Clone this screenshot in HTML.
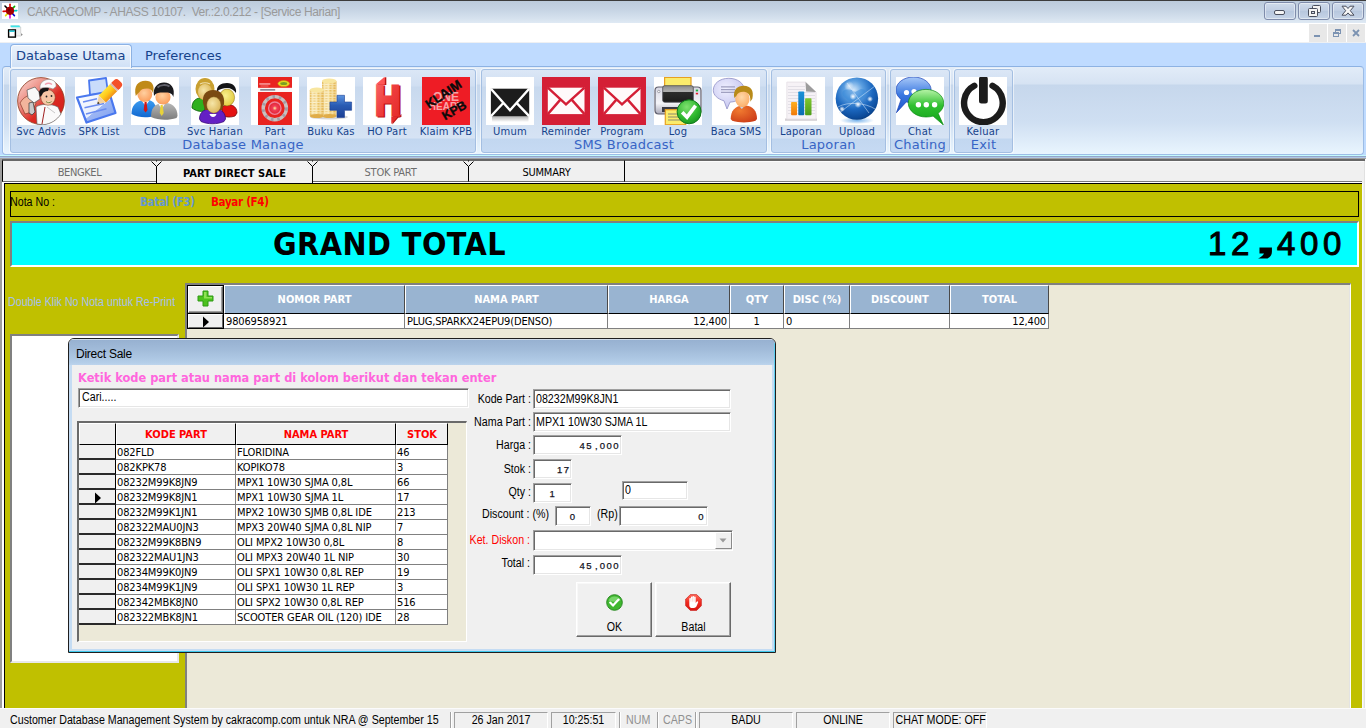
<!DOCTYPE html>
<html lang="id">
<head>
<meta charset="utf-8">
<title>CAKRACOMP - AHASS 10107</title>
<style>
html,body{margin:0;padding:0;}
body{width:1366px;height:728px;overflow:hidden;background:#ece9d8;position:relative;font-family:"Liberation Sans",sans-serif;font-size:12px;color:#000;}
.abs{position:absolute;}
div,span{box-sizing:border-box;}
.nw{white-space:nowrap;}
/* title bar */
#title{left:0;top:0;width:1366px;height:23px;background:linear-gradient(#bccbdc 0,#c6d4e4 40%,#d6e2ee 80%,#dfe9f4 100%);border-top:1px solid #3c3c3c;}
#title .txt{left:27px;top:4px;font:12px "Liberation Sans",sans-serif;color:#9a9a9a;letter-spacing:-0.38px;white-space:pre;}
.wbtn{top:2px;width:32px;height:18px;border:1px solid #7f8cab;border-radius:3px;background:linear-gradient(#cfdbea,#bfcde2 50%,#b7c7de 50%,#c6d4e7);box-shadow:inset 0 0 0 1px rgba(255,255,255,.45);}
#menu{left:0;top:23px;width:1366px;height:19px;background:#fff;}
.mbtn{top:24px;width:18px;height:18px;background:#e8e8e8;}
/* ribbon */
#ribtabs{left:0;top:42px;width:1366px;height:113px;background:#bfdbff;}
#ribbon{left:2px;top:66px;width:1362px;height:89px;border:1px solid #9dbde6;border-radius:4px;background:linear-gradient(#e2ecf8 0,#d6e3f3 17px,#c6d7ec 18px,#cfdff2 55px,#e9f5fe 100%);border-top:1px solid #8db2e3;box-shadow:inset 1px 0 0 rgba(255,255,255,.6);}
.rtab{font:13px "DejaVu Sans",sans-serif;margin-top:1px;color:#15428b;white-space:nowrap;}
.grp{top:69px;height:84px;border:1px solid #a4bfe2;border-radius:3px;background:linear-gradient(#dbe7f6 0,#d0dff2 16px,#c8d9ee 17px,#d6e3f4 68px,#c2d7f0 69px,#c6daf3 100%);box-shadow:0 0 0 1px rgba(255,255,255,.55);}
.ico{top:77px;width:48px;height:48px;background:#fff;overflow:hidden;}
.ilab{top:126px;font:10px/12px "DejaVu Sans",sans-serif;color:#15428b;text-align:center;white-space:nowrap;width:80px;margin-left:-16px;letter-spacing:.2px;}
.glab{top:137px;letter-spacing:.25px;font:13px "DejaVu Sans",sans-serif;color:#3764c5;text-align:center;white-space:nowrap;}

/* ms sans serif emulation */
.ms{font:12.5px "Liberation Sans",sans-serif;white-space:nowrap;transform:scaleX(.853);transform-origin:0 0;}
.msr{transform-origin:100% 0;text-align:right;}
.msc{transform-origin:50% 0;text-align:center;}
.th{font:11px "DejaVu Sans Condensed","DejaVu Sans",sans-serif;white-space:nowrap;}
.thb{font:bold 11px "DejaVu Sans Condensed","DejaVu Sans",sans-serif;white-space:nowrap;}
/* page tabs */
.ptab{top:160px;height:22px;border:1px solid #000;border-top-color:#676767;border-bottom:1px solid #6d6d6d;background:#f0f0f0;text-align:center;line-height:24px;}
/* main grid */
.gh{top:285px;height:29px;background:#99b4d1;border-top:1px solid #fff;border-left:1px solid #fff;border-right:1px solid #4a4a4a;border-bottom:1px solid #000;color:#fff;text-align:center;line-height:28px;}
.gc{top:314px;height:15px;background:#fff;border-right:1px solid #808080;border-bottom:1px solid #808080;line-height:15px;padding:0 2px;letter-spacing:-.15px;}

/* dialog */
.inp{background:#fff;border:1px solid;border-color:#a0a0a0 #fff #fff #a0a0a0;box-shadow:inset 1px 1px 0 #696969,inset -1px -1px 0 #e6e6e6;}
.lbl{width:120px;}
.lcds{font:9.5px "Liberation Sans",sans-serif;letter-spacing:1.47px;color:#141424;-webkit-text-stroke:.25px #141424;white-space:nowrap;text-align:right;}
.cm{display:inline-block;width:6.75px;letter-spacing:0;text-align:center;}
.dh{top:423px;height:22px;background:#f0f0f0;border-right:1px solid #000;border-bottom:1px solid #000;border-top:1px solid #fff;border-left:1px solid #fff;color:#ff0000;text-align:center;line-height:21px;}
.dc{height:15px;background:#fff;border-right:1px solid #808080;border-bottom:1px solid #808080;line-height:14px;padding:1px 0 0 1px;overflow:hidden;letter-spacing:-.12px;}
.di{left:79px;width:37px;height:15px;background:#f0f0f0;border-right:1px solid #000;border-bottom:2px solid #2a2a2a;}
.btn{top:582px;width:76px;height:55px;background:#f0f0f0;border:1px solid;border-color:#fff #696969 #696969 #fff;box-shadow:inset -1px -1px 0 #a0a0a0,inset 1px 1px 0 #f8f8f8;}
</style>
</head>
<body>
<!-- TITLE BAR -->
<div id="title" class="abs">
  <div class="abs txt">CAKRACOMP - AHASS 10107.  Ver.:2.0.212 - [Service Harian]</div>
</div>
<!-- app icon -->
<svg class="abs" style="left:2px;top:3px" width="16" height="16" viewBox="0 0 16 16">
  <rect width="16" height="16" fill="#fff"/>
  <g stroke-width="1.6" stroke-linecap="round">
    <line x1="8" y1="8" x2="8" y2="1.2" stroke="#e00000"/>
    <line x1="8" y1="8" x2="12.6" y2="3.4" stroke="#00b000"/>
    <line x1="8" y1="8" x2="14.8" y2="7.6" stroke="#00c8c8"/>
    <line x1="8" y1="8" x2="12.4" y2="12.6" stroke="#0000d0"/>
    <line x1="8" y1="8" x2="8" y2="15" stroke="#e000e0"/>
    <line x1="8" y1="8" x2="3.6" y2="12.6" stroke="#e0e000"/>
    <line x1="8" y1="8" x2="1.2" y2="8.4" stroke="#e00000"/>
    <line x1="8" y1="8" x2="3" y2="3" stroke="#000"/>
  </g>
  <circle cx="8" cy="7.8" r="4.1" fill="#a40000"/>
  <circle cx="7" cy="7" r="1.6" fill="#7a0000"/>
</svg>
<!-- window buttons -->
<div class="abs wbtn" style="left:1264px"><div class="abs" style="left:9px;top:7px;width:11px;height:5px;border:1px solid #4a4f5e;border-radius:2px;background:#f4f4f4"></div></div>
<div class="abs wbtn" style="left:1298px">
  <div class="abs" style="left:13px;top:2px;width:9px;height:8px;border:1px solid #4a4f5e;border-radius:1.5px;background:#f4f4f4"></div>
  <div class="abs" style="left:9px;top:5px;width:10px;height:9px;border:1px solid #4a4f5e;border-radius:1.5px;background:#f4f4f4"></div>
  <div class="abs" style="left:12px;top:8px;width:4px;height:3px;border:1px solid #4a4f5e;background:#d5dcea"></div>
</div>
<div class="abs wbtn" style="left:1332px">
  <svg class="abs" style="left:8px;top:2px" width="14" height="12" viewBox="0 0 14 12"><path d="M1 1.200L5 1.200L7 3.500L9 1.200L13 1.200L9.300 5.700L13 10.200L9 10.200L7 7.900L5 10.200L1 10.200L4.700 5.700Z" fill="#f6f6f6" stroke="#4a4f5e" stroke-width="1" stroke-linejoin="round"/></svg>
</div>

<div id="menu" class="abs"></div>
<!-- mdi child icon -->
<svg class="abs" style="left:7px;top:24px" width="17" height="16" viewBox="0 0 17 16">
  <path d="M3.500 1.800h8.800l1.400 1.200v6l1.800 1.600-1.800 1.400H8.500" fill="#efefef" stroke="#c9c9c9" stroke-width=".7"/>
  <path d="M3.600 1.600h8.600l1.200 1.600h-9.800z" fill="#3ee6ea"/>
  <rect x="1.600" y="5.900" width="6.800" height="7.200" fill="#fff" stroke="#000" stroke-width="1.400"/>
  <rect x="2.300" y="6.400" width="5.400" height="1.500" fill="#16c4d6"/>
  <path d="M13.800 9.200l1.900 1.500-1.700 1.100z" fill="#8c8c8c"/>
</svg>
<div class="abs mbtn" style="left:1309px"><div class="abs" style="left:5px;top:11px;width:6px;height:2px;background:#7c93b2"></div></div>
<div class="abs mbtn" style="left:1328px">
  <div class="abs" style="left:7px;top:5px;width:6px;height:5px;border:1px solid #7c93b2;border-top-width:2px"></div>
  <div class="abs" style="left:5px;top:8px;width:6px;height:5px;border:1px solid #7c93b2;border-top-width:2px;background:#e8e8e8"></div>
</div>
<div class="abs mbtn" style="left:1347px"><svg class="abs" style="left:5px;top:5px" width="8" height="8" viewBox="0 0 8 8"><path d="M1 1L7 7M7 1L1 7" stroke="#7c93b2" stroke-width="1.8"/></svg></div>

<div id="ribtabs" class="abs"></div>
<div class="abs" style="left:0;top:42px;width:1366px;height:1px;background:#eef0f3"></div>
<div id="ribbon" class="abs"></div>
<!-- ribbon tabs -->
<div class="abs" style="z-index:2;left:10px;top:44px;width:122px;height:24px;border:1px solid #8db2e3;border-bottom:none;border-radius:4px 4px 0 0;background:linear-gradient(#eaf2fc,#dbe8f8 60%,#cfe0f6);box-shadow:inset 0 0 0 1px rgba(255,255,255,.7)"></div>
<div class="abs rtab" style="z-index:3;left:16px;top:47px">Database Utama</div>
<div class="abs rtab" style="left:145px;top:47px">Preferences</div>
<div class="abs grp" style="left:10px;width:466px"></div>
<div class="abs glab" style="left:10px;width:466px">Database Manage</div>
<div class="abs grp" style="left:481px;width:286px"></div>
<div class="abs glab" style="left:481px;width:286px">SMS Broadcast</div>
<div class="abs grp" style="left:771px;width:115px"></div>
<div class="abs glab" style="left:771px;width:115px">Laporan</div>
<div class="abs grp" style="left:890px;width:60px"></div>
<div class="abs glab" style="left:890px;width:60px">Chating</div>
<div class="abs grp" style="left:954px;width:59px"></div>
<div class="abs glab" style="left:954px;width:59px">Exit</div>
<div class="abs ico" style="left:17px"><!--I:svcadvis--><svg width="48" height="48" viewBox="0 0 48 48" style="display:block"><defs><linearGradient id="sa1" x1="0" y1="0" x2="1" y2="1"><stop offset="0" stop-color="#fbe0da"/><stop offset=".35" stop-color="#ec8a80"/><stop offset=".6" stop-color="#dc2a22"/><stop offset="1" stop-color="#d01c18"/></linearGradient></defs><circle cx="24" cy="24" r="23.4" fill="url(#sa1)" stroke="#8a3a20" stroke-width=".8"/><path d="M3 26c2-4 6-7 10-8l6 8-4 9-7 2z" fill="#f3b49c" stroke="#7a2a1a" stroke-width=".6"/><path d="M10 13l8-3 4 5 1 7-6 4-6-5z" fill="#f8f8f8" stroke="#555" stroke-width=".7"/><path d="M12 26l4-1 2 10-3 3-3-2z" fill="#c8c8c8" stroke="#333" stroke-width=".7"/><path d="M19 30c4-3 14-4 22 0l3 7c-4 6-10 10-18 10.800L20 47z" fill="#fafafa" stroke="#555" stroke-width=".6"/><path d="M28 30l-3 17" stroke="#a02020" stroke-width="1" fill="none"/><path d="M30 30l8 6" stroke="#bbb" stroke-width=".8"/><ellipse cx="31" cy="20.500" rx="7.200" ry="7.800" fill="#f6c6a6" stroke="#7a3a20" stroke-width=".5"/><path d="M22 15c1-4 6-6 10-4l-1 3c-3 0-5 1-6 4l-2 2z" fill="#161616"/><path d="M23 10c0-5 5-8 10-7.500 4 .5 6.500 3 6 7l-3 2.500c-4-2-9-2-13-.5z" fill="#fbfbfb" stroke="#999" stroke-width=".6"/><path d="M28 7.500c2-1.500 5-1.500 7 0" stroke="#f0a0b0" stroke-width="1.500" fill="none"/><circle cx="29.500" cy="19.500" r=".9" fill="#222"/><circle cx="34.500" cy="19" r=".9" fill="#222"/><path d="M29 24.500c1.500 1.500 4 1.500 5.500 0" stroke="#7a8a40" stroke-width="1" fill="#eef0d0"/></svg></div>
<div class="abs ilab" style="left:17px">Svc Advis</div>
<div class="abs ico" style="left:75px"><!--I:spk--><svg width="48" height="48" viewBox="0 0 48 48" style="display:block"><defs><linearGradient id="sp1" x1="0" y1="0" x2="1" y2="1"><stop offset="0" stop-color="#ffffff"/><stop offset=".55" stop-color="#e6eefd"/><stop offset=".56" stop-color="#9cb6f4"/><stop offset="1" stop-color="#7f9ff0"/></linearGradient><linearGradient id="sp2" x1="0" y1="0" x2="1" y2="0"><stop offset="0" stop-color="#ffe23a"/><stop offset=".5" stop-color="#ffc81a"/><stop offset="1" stop-color="#f09018"/></linearGradient></defs><path d="M14 3.500l17-2.500 2 15-18 2z" fill="#c9dcfb" stroke="#4a78ee" stroke-width="1.800" stroke-linejoin="round"/><path d="M2 20.500l32-6 6.500 21.500-29 9.500z" fill="url(#sp1)" stroke="#4a78ee" stroke-width="2.200" stroke-linejoin="round"/><path d="M8 25l14-3.300M9.500 30.700l19.500-4.300M11 37l20.500-5.200" stroke="#6a8cf0" stroke-width="1.500"/><g transform="rotate(45 33.5 15.75)"><rect x="28.500" y="8.500" width="10" height="16" fill="url(#sp2)"/><path d="M28.500 24.500h10l-5 7z" fill="#f4d2a0"/><path d="M32.200 29.500l1.300 2 1.300-2z" fill="#222"/><rect x="28.500" y="-.5" width="10" height="8" rx="3.500" fill="#f4502a"/><rect x="28.500" y="4" width="10" height="3" fill="#f4502a"/><rect x="28.500" y="6.800" width="10" height="2" fill="#d8b8b0"/></g></svg></div>
<div class="abs ilab" style="left:75px">SPK List</div>
<div class="abs ico" style="left:131px"><!--I:cdb--><svg width="48" height="48" viewBox="0 0 48 48" style="display:block"><defs><radialGradient id="cd1" cx=".45" cy=".4" r=".7"><stop offset="0" stop-color="#ffd0a0"/><stop offset="1" stop-color="#fa9450"/></radialGradient><linearGradient id="cd2" x1="0" y1="0" x2="0" y2="1"><stop offset="0" stop-color="#3c9cf0"/><stop offset="1" stop-color="#1268d0"/></linearGradient><linearGradient id="cd3" x1="0" y1="0" x2="0" y2="1"><stop offset="0" stop-color="#b8b8b8"/><stop offset="1" stop-color="#7c7c7c"/></linearGradient></defs><path d="M.5 37c0-8 4-13 12-14l5 0c5 1 8 5 8 11l-2 5c-7 2-16 2-23-2z" fill="url(#cd2)"/><path d="M11 24l3.500 5 3.500-5z" fill="#fff"/><path d="M13.600 25h2l.9 8-1.900 2.500-1.900-2.500z" fill="#d01818"/><ellipse cx="13.800" cy="17.500" rx="7.400" ry="7.600" fill="url(#cd1)"/><path d="M4.800 19C2.500 9 7 3.800 14.500 3.800c6.500 0 9.500 4.500 7.500 12.200-1-3-3-4.500-6-4.500-4 0-6.500 1-7.500 3.500-1 1-2.500 2-3.700 4z" fill="#c08a18"/><path d="M20 40c0-8 3-13 11-14l5 0c6 1 10.500 5 10.500 13l-1 2c-8 2.500-18 2.500-25.500-1z" fill="url(#cd3)"/><path d="M27.500 27l3.200 5 3.200-5z" fill="#fff"/><path d="M29.700 28h2l1 8-2 3-2-3z" fill="#e8d23a"/><ellipse cx="32" cy="20" rx="7.600" ry="7.600" fill="url(#cd1)"/><path d="M23 19C21.500 10 27 5.500 33 5.500C40 5.500 44.500 11 42.300 20C41.500 17 39.500 15.500 35 15.500C30 15.500 25.500 15 23 19Z" fill="#1a1a1e"/><path d="M26.500 10.500c3-3 9-3 12-1" stroke="#62626c" stroke-width="2" fill="none"/></svg></div>
<div class="abs ilab" style="left:131px">CDB</div>
<div class="abs ico" style="left:191px"><!--I:svch--><svg width="48" height="48" viewBox="0 0 48 48" style="display:block"><defs><radialGradient id="sh1" cx=".4" cy=".4" r=".7"><stop offset="0" stop-color="#f6e6a8"/><stop offset="1" stop-color="#d8b050"/></radialGradient><radialGradient id="sh2" cx=".4" cy=".4" r=".7"><stop offset="0" stop-color="#f8f090"/><stop offset="1" stop-color="#e0c838"/></radialGradient></defs><path d="M1 31c0-6 3-9.500 8-10l5 2v11c-5 1-9 0-13-3z" fill="#2eb01e" stroke="#0a5a0a" stroke-width=".8"/><ellipse cx="14" cy="12" rx="9.500" ry="11" fill="#c9a030"/><ellipse cx="14" cy="15" rx="7" ry="8" fill="url(#sh1)"/><path d="M9 7c3-1.500 7-1.500 10 0" stroke="#f0e0b0" stroke-width="1.200" fill="none"/><path d="M31 30c2-2 6-2.500 9-2 4 1 6 4 6 8l-2 3c-4 1.500-9 1.500-13-.5z" fill="#e41212" stroke="#7a0a0a" stroke-width=".8"/><ellipse cx="36" cy="20.500" rx="7.600" ry="8.400" fill="url(#sh2)" stroke="#8a6a10" stroke-width=".5"/><path d="M26 15c-1-6 4-9 10-9 6 0 10 4 9 10-2-3-5-5-9-5-4 0-8 1-10 4z" fill="#141416"/><path d="M8.500 42c0-6 4-9.500 9-10h8c5 .5 9 4 9 10l-1.500 2.500c-7 3-16 3-23 0z" fill="#6420c4" stroke="#3a0a7a" stroke-width=".8"/><path d="M18.500 37c1 4 6 4 7 0z" fill="#fff"/><path d="M12 26c-1-8 3-13 10-13 8 0 12 6 11 14l-2 6-17 0z" fill="#7a4a12"/><ellipse cx="22.800" cy="28" rx="7.200" ry="8.200" fill="url(#sh1)" stroke="#6a4a10" stroke-width=".4"/><path d="M14.500 25c1-6 5-9 10-8-4 1-8 4-10 8z" fill="#7a4a12"/></svg></div>
<div class="abs ilab" style="left:191px">Svc Harian</div>
<div class="abs ico" style="left:251px"><!--I:part--><svg width="48" height="48" viewBox="0 0 48 48" style="display:block"><defs><radialGradient id="pt1" cx=".5" cy=".5" r=".5"><stop offset="0" stop-color="#fff0a0"/><stop offset=".35" stop-color="#f04058"/><stop offset="1" stop-color="#e02030"/></radialGradient></defs><rect x="7" y="0" width="34" height="48" fill="#e9231f"/><rect x="7" y="10.800" width="34" height="4.200" fill="#fdf4f4"/><rect x="9.200" y="12" width="15" height="1.700" fill="#8a8a96"/><rect x="8.300" y="6.200" width="11" height="1.500" fill="#f8a0a0"/><rect x="9.500" y="8.500" width="8" height="1" fill="#f07070"/><ellipse cx="32.700" cy="6.600" rx="5.800" ry="3" fill="#e8d820" stroke="#b8a010" stroke-width=".5"/><ellipse cx="32.700" cy="6.600" rx="3.500" ry="1.500" fill="#7aa020"/><circle cx="23.800" cy="31.200" r="11.600" fill="none" stroke="#c8c0c0" stroke-width="3.400"/><circle cx="23.800" cy="31.200" r="11.600" fill="none" stroke="#80788a" stroke-width="3" stroke-dasharray="2.500 4" opacity=".5"/><circle cx="23.800" cy="31.200" r="6.200" fill="url(#pt1)" stroke="#ee8098" stroke-width="1.400"/></svg></div>
<div class="abs ilab" style="left:251px">Part</div>
<div class="abs ico" style="left:307px"><!--I:buku--><svg width="48" height="48" viewBox="0 0 48 48" style="display:block"><defs><linearGradient id="bk1" x1="0" y1="0" x2="1" y2="0"><stop offset="0" stop-color="#e6bc58"/><stop offset=".3" stop-color="#fdf4d0"/><stop offset=".6" stop-color="#f0cf78"/><stop offset="1" stop-color="#e0ac48"/></linearGradient><linearGradient id="bk2" x1="0" y1="0" x2="0" y2="1"><stop offset="0" stop-color="#5c94e0"/><stop offset=".45" stop-color="#2a5cb4"/><stop offset="1" stop-color="#1c3f94"/></linearGradient><pattern id="bk3" width="4" height="2.600" patternUnits="userSpaceOnUse"><rect width="4" height="1.600" fill="url(#bk1)"/><rect y="1.600" width="4" height="1" fill="#fdf6dc"/></pattern></defs><ellipse cx="22" cy="40" rx="19" ry="2.500" fill="#d8d8d8"/><rect x="15" y="4" width="14.500" height="35" fill="url(#bk1)"/><rect x="15" y="4" width="14.500" height="35" fill="url(#bk3)" opacity=".6"/><ellipse cx="22.200" cy="4" rx="7.250" ry="2.400" fill="#f8e6a0"/><ellipse cx="22.200" cy="39" rx="7.250" ry="2" fill="#e0ac48"/><rect x="2.800" y="13" width="14.200" height="26" fill="url(#bk1)"/><rect x="2.800" y="13" width="14.200" height="26" fill="url(#bk3)" opacity=".6"/><ellipse cx="9.900" cy="13" rx="7.100" ry="2.400" fill="#f8e6a0"/><ellipse cx="9.900" cy="39" rx="7.100" ry="2" fill="#e0ac48"/><path d="M30 18.300h7.500v6.700h7.100v8.300h-7.100v7.100H30v-7.100h-7.100V25H30z" fill="url(#bk2)" stroke="#1c3f94" stroke-width=".6"/></svg></div>
<div class="abs ilab" style="left:307px">Buku Kas</div>
<div class="abs ico" style="left:363px"><!--I:ho--><svg width="48" height="48" viewBox="0 0 48 48" style="display:block"><defs><linearGradient id="ho1" x1="0" y1="0" x2="1" y2="1"><stop offset="0" stop-color="#fa6c6c"/><stop offset=".5" stop-color="#ee3c3c"/><stop offset="1" stop-color="#e22828"/></linearGradient></defs><path d="M14 8l8.300-7.800h1v7.800z" fill="#b81414"/><path d="M29.400 40v7.400l9-10.400v3z" fill="#b81414"/><text x="26" y="38.900" text-anchor="middle" font-family="Liberation Sans, sans-serif" font-weight="bold" font-size="42.500" fill="#b81414" stroke="#b81414" stroke-width="3" stroke-linejoin="miter" transform="translate(26 0) scale(.82 1) translate(-26 0)">H</text><text x="24.700" y="38.200" text-anchor="middle" font-family="Liberation Sans, sans-serif" font-weight="bold" font-size="42.500" fill="url(#ho1)" stroke="url(#ho1)" stroke-width="3" stroke-linejoin="miter" transform="translate(24.700 0) scale(.82 1) translate(-24.700 0)">H</text><path d="M12.600 7.400l8.400-7.200h.9v7.200z" fill="#f55"/><path d="M28.300 39.500h8.800v-2.500l-8.800 10z" fill="#e42c2c"/></svg></div>
<div class="abs ilab" style="left:363px">HO Part</div>
<div class="abs ico" style="left:422px"><!--I:klaim--><svg width="48" height="48" viewBox="0 0 48 48" style="display:block"><rect width="48" height="48" fill="#ee1c25"/><text x="24" y="24" text-anchor="middle" font-family="Liberation Sans, sans-serif" font-weight="bold" font-size="12" fill="#fff" opacity=".6">ONE</text><text x="24" y="33" text-anchor="middle" font-family="Liberation Sans, sans-serif" font-weight="bold" font-size="10" fill="#fff" opacity=".6">HEART</text><text x="21.600" y="21.400" text-anchor="middle" font-family="Liberation Sans, sans-serif" font-weight="bold" font-size="12.800" fill="#0a0a0a" stroke="#0a0a0a" stroke-width=".4" transform="rotate(-33.500 21.600 17.400)">KLAIM</text><text x="32.200" y="37.500" text-anchor="middle" font-family="Liberation Sans, sans-serif" font-weight="bold" font-size="12.300" fill="#0a0a0a" stroke="#0a0a0a" stroke-width=".4" transform="rotate(-30 32.200 33.500)">KPB</text></svg></div>
<div class="abs ilab" style="left:422px">Klaim KPB</div>
<div class="abs ico" style="left:486px"><!--I:umum--><svg width="48" height="48" viewBox="0 0 48 48" style="display:block"><defs><linearGradient id="um1" x1="0" y1="0" x2="0" y2="1"><stop offset="0" stop-color="#9a9a9a"/><stop offset="1" stop-color="#ffffff"/></linearGradient></defs><rect x="6" y="39" width="36.500" height="6" fill="url(#um1)" opacity=".8"/><rect x="4.900" y="11.700" width="38.300" height="27.500" fill="#1c1c1c"/><path d="M4.900 11.700L24 33.300 43.200 11.700M4.900 39.200L17.500 25.800M43.200 39.200L30.500 25.800" fill="none" stroke="#fff" stroke-width="2.400"/></svg></div>
<div class="abs ilab" style="left:486px">Umum</div>
<div class="abs ico" style="left:542px"><!--I:rem--><svg width="48" height="48" viewBox="0 0 48 48" style="display:block"><rect width="48" height="48" fill="#d41f36"/><rect x="5.800" y="10.700" width="36.700" height="26.400" fill="#fffafa"/><path d="M5.800 10.700L24 27.300 42.500 10.700M5.800 37.100L18.600 22.400M42.500 37.100L29.400 22.400" fill="none" stroke="#d41f36" stroke-width="2.400"/></svg></div>
<div class="abs ilab" style="left:542px">Reminder</div>
<div class="abs ico" style="left:598px"><!--I:prog--><svg width="48" height="48" viewBox="0 0 48 48" style="display:block"><rect width="48" height="48" fill="#d41f36"/><rect x="5.800" y="10.700" width="36.700" height="26.400" fill="#fffafa"/><path d="M5.800 10.700L24 27.300 42.500 10.700M5.800 37.100L18.600 22.400M42.500 37.100L29.400 22.400" fill="none" stroke="#d41f36" stroke-width="2.400"/></svg></div>
<div class="abs ilab" style="left:598px">Program</div>
<div class="abs ico" style="left:654px"><!--I:log--><svg width="48" height="48" viewBox="0 0 48 48" style="display:block"><defs><linearGradient id="lg1" x1="0" y1="0" x2="0" y2="1"><stop offset="0" stop-color="#8c8c8c"/><stop offset=".35" stop-color="#b0b0b0"/><stop offset=".4" stop-color="#2c2c2c"/><stop offset="1" stop-color="#1c1c1c"/></linearGradient><linearGradient id="lg2" x1="0" y1="0" x2="0" y2="1"><stop offset="0" stop-color="#d8d8e4"/><stop offset=".6" stop-color="#f4f4f8"/><stop offset="1" stop-color="#a8a8b8"/></linearGradient><radialGradient id="lg3" cx=".4" cy=".3" r=".8"><stop offset="0" stop-color="#7fe070"/><stop offset=".6" stop-color="#2eb82e"/><stop offset="1" stop-color="#148a1c"/></radialGradient></defs><rect x="10.600" y=".4" width="26.400" height="10" fill="#fbec6c" stroke="#e8a020" stroke-width="1.200"/><rect x="1" y="10" width="46" height="27" rx="3.500" fill="url(#lg2)" stroke="#60606e" stroke-width="1.200"/><rect x="8.700" y="8.700" width="30.600" height="16.500" rx="2" fill="url(#lg1)" stroke="#4a4a52" stroke-width=".8"/><rect x="8" y="30" width="26" height="5" fill="#3a3a44"/><rect x="11.300" y="32.700" width="20.400" height="15" fill="#fbec6c" stroke="#e8a020" stroke-width="1.200"/><path d="M14 37h14M14 40h14M14 43h14" stroke="#8a8a70" stroke-width="1.100"/><rect x="41.800" y="12.600" width="2.300" height="1.800" fill="#20b040"/><rect x="41.800" y="15.800" width="2.300" height="1.600" fill="#e02030"/><circle cx="4.800" cy="14.500" r="1.200" fill="#fff" stroke="#70707c" stroke-width=".6"/><circle cx="35.100" cy="34.800" r="12" fill="url(#lg3)" stroke="#0f7a1c" stroke-width="1"/><path d="M28.200 35.200l4.800 5 8.600-11.500" fill="none" stroke="#fff" stroke-width="3.600" stroke-linejoin="miter"/></svg></div>
<div class="abs ilab" style="left:654px">Log</div>
<div class="abs ico" style="left:712px"><!--I:baca--><svg width="48" height="48" viewBox="0 0 48 48" style="display:block"><defs><radialGradient id="bc1" cx=".4" cy=".35" r=".8"><stop offset="0" stop-color="#f0f0ff"/><stop offset="1" stop-color="#bcbcec"/></radialGradient><radialGradient id="bc2" cx=".45" cy=".4" r=".7"><stop offset="0" stop-color="#ffd8a8"/><stop offset="1" stop-color="#fba860"/></radialGradient><radialGradient id="bc3" cx=".35" cy=".3" r=".9"><stop offset="0" stop-color="#f07a30"/><stop offset="1" stop-color="#c83414"/></radialGradient></defs><path d="M16.800 1.300c9 0 15.500 5.200 15.500 12 0 6.500-6 11.500-14.300 11.800L15 32l-3-8.200C5.500 22 1.300 18 1.300 13.300c0-6.800 6.500-12 15.500-12z" fill="url(#bc1)" stroke="#9a9acc" stroke-width=".9"/><path d="M9 9.800h14M9 12.700h14M9 15.400h14" stroke="#a0a0c0" stroke-width="1.200"/><path d="M18.700 42c0-8 4.500-13 11-13.500h4.500c6.500.5 10.800 5.500 10.800 13.500l-1.500 1.800c-7 2.200-16 2.200-23.300 0z" fill="url(#bc3)"/><path d="M27.300 29.300l2.500 2.700 2.600-2.700z" fill="#c0d8f0"/><ellipse cx="30.400" cy="21.800" rx="7.200" ry="8.400" fill="url(#bc2)"/><path d="M22.300 21c-1.500-8 3-12.200 9.500-12.200 7 0 10.500 5 8.500 13l-2 3c.5-5-1-9-5-9.800-4-.8-7.500.5-9 4z" fill="#b88a18"/></svg></div>
<div class="abs ilab" style="left:712px">Baca SMS</div>
<div class="abs ico" style="left:777px"><!--I:lap--><svg width="48" height="48" viewBox="0 0 48 48" style="display:block"><defs><linearGradient id="lp1" x1="0" y1="0" x2="0" y2="1"><stop offset="0" stop-color="#ffb020"/><stop offset="1" stop-color="#f07808"/></linearGradient><linearGradient id="lp2" x1="0" y1="0" x2="0" y2="1"><stop offset="0" stop-color="#1a90d8"/><stop offset="1" stop-color="#0c6cb0"/></linearGradient><linearGradient id="lp3" x1="0" y1="0" x2="0" y2="1"><stop offset="0" stop-color="#80c830"/><stop offset="1" stop-color="#4c9c18"/></linearGradient></defs><rect x="8" y="41.500" width="32" height="2.300" fill="#d4d0d4"/><path d="M9.800 5.100h18.700l10.600 10v26.900H9.800z" fill="#f6f2f6" stroke="#e4dee4" stroke-width=".8"/><path d="M11 9.500h17M11 12.500h17M11 15.500h27M11 18.500h27M11 21.500h27M11 24.500h27M11 27.500h27M11 30.500h27M11 33.500h27M11 36.500h27" stroke="#e0dce4" stroke-width=".9"/><path d="M28.500 5.100l10.600 10-10-.7z" fill="#9c9c9c"/><rect x="14.100" y="25" width="5.900" height="13.200" rx=".8" fill="url(#lp1)"/><rect x="21.300" y="14.400" width="5.900" height="23.800" rx=".8" fill="url(#lp2)"/><rect x="28.100" y="21.200" width="6.400" height="17" rx=".8" fill="url(#lp3)"/></svg></div>
<div class="abs ilab" style="left:777px">Laporan</div>
<div class="abs ico" style="left:833px"><!--I:upl--><svg width="48" height="48" viewBox="0 0 48 48" style="display:block"><defs><radialGradient id="up1" cx=".42" cy=".3" r=".75"><stop offset="0" stop-color="#d4e8fa"/><stop offset=".3" stop-color="#5a9ee0"/><stop offset=".6" stop-color="#1c68c0"/><stop offset=".88" stop-color="#0c4a98"/><stop offset="1" stop-color="#08356e"/></radialGradient><radialGradient id="up2" cx=".5" cy=".5" r=".5"><stop offset="0" stop-color="#7ab4ec"/><stop offset="1" stop-color="#7ab4ec" stop-opacity="0"/></radialGradient><radialGradient id="up3" cx=".5" cy=".5" r=".5"><stop offset="0" stop-color="#fff"/><stop offset="1" stop-color="#fff" stop-opacity="0"/></radialGradient></defs><ellipse cx="24" cy="43.500" rx="17" ry="3.500" fill="url(#up2)"/><circle cx="23.900" cy="21.600" r="21.200" fill="url(#up1)"/><path d="M10 14c4-3 9-2 12 1l6-3c4 0 6 3 5 6l-6 5c-3 4-8 4-11 1l-5-4c-2-2-2-4-1-6z" fill="#3a8ad8" opacity=".55"/><path d="M6 36L42 9M5 30c10-6 28-4 37 2M14 6l22 30" stroke="#dcecfb" stroke-width=".8" opacity=".65" fill="none"/><circle cx="20" cy="19.500" r="3.500" fill="url(#up3)"/><circle cx="37" cy="22" r="3" fill="url(#up3)"/><circle cx="25" cy="27.500" r="3.500" fill="url(#up3)"/><circle cx="9" cy="32" r="3" fill="url(#up3)"/><circle cx="16" cy="9" r="5" fill="url(#up3)" opacity=".7"/></svg></div>
<div class="abs ilab" style="left:833px">Upload</div>
<div class="abs ico" style="left:896px"><!--I:chat--><svg width="48" height="48" viewBox="0 0 48 48" style="display:block"><defs><linearGradient id="ch1" x1="0" y1="0" x2="0" y2="1"><stop offset="0" stop-color="#a8c8f8"/><stop offset=".5" stop-color="#3a78e0"/><stop offset="1" stop-color="#1c54c8"/></linearGradient><linearGradient id="ch2" x1="0" y1="0" x2="0" y2="1"><stop offset="0" stop-color="#b8f4a8"/><stop offset=".45" stop-color="#30c030"/><stop offset="1" stop-color="#10a018"/></linearGradient></defs><path d="M17.500 0c9.700 0 17.600 5.800 17.600 13s-7.900 13-17.600 13c-2.600 0-5-.4-7.200-1.100L.4 35.700l4.700-13.300C2 20 0 16.700 0 13 0 5.800 7.800 0 17.500 0z" fill="url(#ch1)" stroke="#1c44b8" stroke-width=".7"/><circle cx="10.500" cy="15.500" r="2.600" fill="#fff"/><circle cx="18" cy="14.600" r="2.600" fill="#fff"/><path d="M30 12.400c9.800 0 17.800 6.200 17.800 13.800 0 4-2.200 7.600-5.700 10.100L47.400 48l-10.300-8.900c-2.200.6-4.600.9-7.100.9-9.800 0-17.700-6.200-17.700-13.800S20.200 12.400 30 12.400z" fill="url(#ch2)" stroke="#0c8a14" stroke-width=".7"/><circle cx="22.400" cy="27.800" r="2.700" fill="#fff"/><circle cx="30.300" cy="27.800" r="2.700" fill="#fff"/><circle cx="38.600" cy="27.800" r="2.700" fill="#fff"/></svg></div>
<div class="abs ilab" style="left:896px">Chat</div>
<div class="abs ico" style="left:959px"><!--I:kel--><svg width="48" height="48" viewBox="0 0 48 48" style="display:block"><path d="M15.300 8.800A19.300 19.300 0 1 0 33.500 8.800" fill="none" stroke="#1c1c1c" stroke-width="6.400" stroke-linecap="round"/><rect x="20" y="-.5" width="8.800" height="27" rx="2.500" fill="#1c1c1c"/></svg></div>
<div class="abs ilab" style="left:959px">Keluar</div>

<!-- strip below ribbon -->
<div class="abs" style="left:0;top:155px;width:1366px;height:1px;background:#c4fbff"></div>
<div class="abs" style="left:0;top:156px;width:1366px;height:1px;background:#94a6c8"></div>
<div class="abs" style="left:0;top:157px;width:1366px;height:1px;background:#aec8e8"></div>
<div class="abs" style="left:0;top:158px;width:1366px;height:1px;background:#a2a2a2"></div>
<div class="abs" style="left:0;top:159px;width:1366px;height:2px;background:#676767"></div>
<div class="abs" style="left:0;top:161px;width:1366px;height:1px;background:#fbfbfb"></div>
<div class="abs" style="left:0;top:162px;width:1366px;height:546px;background:#f0f0f0"></div>
<div class="abs" style="left:0;top:159px;width:2px;height:549px;background:#9d9d9d"></div>
<div class="abs" style="left:2px;top:162px;width:2px;height:546px;background:#fff"></div>
<div class="abs" style="left:1364px;top:161px;width:1px;height:547px;background:#e1e1e1"></div><div class="abs" style="left:1362px;top:183px;width:1px;height:525px;background:#fafaff"></div><div class="abs" style="left:1365px;top:159px;width:1px;height:549px;background:#fff"></div>
<!-- line under tab strip -->
<div class="abs" style="left:2px;top:181px;width:1360px;height:1px;background:#7a7a7a"></div>
<div class="abs" style="left:2px;top:182px;width:1360px;height:1px;background:#fff"></div>
<!-- page tabs -->
<div class="abs ptab th" style="left:2px;width:155px;color:#6d6d6d;letter-spacing:-.4px">BENGKEL</div>
<div class="abs ptab th" style="left:312px;width:157px;color:#6d6d6d;letter-spacing:-.2px">STOK PART</div>
<div class="abs ptab th" style="left:468px;width:157px;color:#000;letter-spacing:-.2px">SUMMARY</div>
<div class="abs ptab thb" style="left:156px;width:157px;height:24px;border-bottom:none;background:#f2f2f2;line-height:25px">PART DIRECT SALE</div>
<svg class="abs" style="left:150px;top:160px" width="14" height="8" viewBox="0 0 14 8"><path d="M1.5 1.5L6.5 6.5L11.5 1.5" fill="#f0f0f0" stroke="#000" stroke-width="1"/></svg>
<svg class="abs" style="left:306px;top:160px" width="14" height="8" viewBox="0 0 14 8"><path d="M1.5 1.5L6.5 6.5L11.5 1.5" fill="#f0f0f0" stroke="#000" stroke-width="1"/></svg>
<svg class="abs" style="left:462px;top:160px" width="14" height="8" viewBox="0 0 14 8"><path d="M1.5 1.5L6.5 6.5L11.5 1.5" fill="#f0f0f0" stroke="#000" stroke-width="1"/></svg>

<!-- olive panel -->
<div class="abs" style="left:4px;top:183px;width:1358px;height:525px;background:#c0c000;border:1px solid #000;border-bottom:none;border-right:none"></div>
<!-- nota box -->
<div class="abs" style="left:10px;top:191px;width:1349px;height:26px;border:1px solid #000"></div>
<div class="abs ms" style="left:10px;top:195px">Nota No :</div>
<div class="abs thb" style="left:140px;top:195px;color:#6699cc;letter-spacing:-.3px;font-size:11.5px">Batal (F3)</div>
<div class="abs thb" style="left:211px;top:195px;color:#ff0000;letter-spacing:-.3px;font-size:11.5px">Bayar (F4)</div>
<!-- grand total -->
<div class="abs" style="left:10px;top:221px;width:1349px;height:46px;background:#00ffff;border:2px solid;border-color:#808080 #fff #fff #808080"></div>
<div class="abs nw" style="left:273px;top:225px;font:bold 32px 'DejaVu Sans Condensed','DejaVu Sans',sans-serif;letter-spacing:.45px;line-height:38px">GRAND TOTAL</div>
<div class="abs nw" id="lcd" style="right:20px;top:225px;font:33px 'Liberation Sans',sans-serif;line-height:38px;letter-spacing:4.65px;-webkit-text-stroke:1px #000">12<span style="display:inline-block;width:23px;letter-spacing:0;text-align:center;font-weight:bold;transform:scaleX(2.2) translateY(-2px)">,</span>400</div>
<div class="abs ms" style="left:8px;top:295px;color:#a6c0ea">Double Klik No Nota untuk Re-Print</div>
<!-- left white list -->
<div class="abs" style="left:10px;top:334px;width:169px;height:329px;background:#fff;border:2px solid;border-color:#808080 #e8e8e8 #e8e8e8 #808080"></div>
<!-- beige panel -->
<div class="abs" style="left:185px;top:283px;width:1166px;height:425px;background:#ece9d8;border-top:2px solid #808080;border-left:2px solid #808080;border-right:1px solid #fff;box-shadow:inset -1px 0 0 #e3e3e3"></div>
<!-- grid -->
<div class="abs" style="left:187px;top:285px;width:37px;height:44px;background:#000"></div>
<div class="abs" style="left:188px;top:286px;width:35px;height:27px;background:#f0f0f0;border:1px solid;border-color:#fff #696969 #696969 #fff;box-shadow:inset -1px -1px 0 #a0a0a0"></div>
<svg class="abs" style="left:197px;top:290px" width="17" height="17" viewBox="0 0 17 17"><path d="M6 1h5v5h5v5h-5v5H6v-5H1V6h5z" fill="#4cc11e" stroke="#2f9a14" stroke-width="1"/><path d="M7 2h2.500v5H15v1.500H7z" fill="#9be860" opacity=".85"/></svg>
<div class="abs" style="left:188px;top:314px;width:35px;height:14px;background:#f0f0f0;border:1px solid;border-color:#fff #696969 #696969 #fff"></div>
<svg class="abs" style="left:202px;top:316px" width="8" height="12" viewBox="0 0 8 12"><path d="M1 0.5L7 6L1 11.5z" fill="#000"/></svg>
<div class="abs" style="left:224px;top:285px;width:825px;height:29px;background:#000"></div>
<div class="abs gh thb" style="left:224px;width:181px">NOMOR PART</div>
<div class="abs gc th" style="left:224px;width:181px;text-align:left">9806958921</div>
<div class="abs gh thb" style="left:405px;width:203px">NAMA PART</div>
<div class="abs gc th" style="left:405px;width:203px;text-align:left">PLUG,SPARKX24EPU9(DENSO)</div>
<div class="abs gh thb" style="left:608px;width:122px">HARGA</div>
<div class="abs gc th" style="left:608px;width:122px;text-align:right">12,400</div>
<div class="abs gh thb" style="left:730px;width:54px">QTY</div>
<div class="abs gc th" style="left:730px;width:54px;text-align:center">1</div>
<div class="abs gh thb" style="left:784px;width:66px">DISC (%)</div>
<div class="abs gc th" style="left:784px;width:66px;text-align:left">0</div>
<div class="abs gh thb" style="left:850px;width:100px">DISCOUNT</div>
<div class="abs gc th" style="left:850px;width:100px;text-align:left"></div>
<div class="abs gh thb" style="left:950px;width:99px">TOTAL</div>
<div class="abs gc th" style="left:950px;width:99px;text-align:right">12,400</div>

<!-- dialog frame -->
<div class="abs" style="left:68px;top:338px;width:708px;height:315px;background:#f0f0f0;border:1px solid #1e1e1e;border-radius:6px 6px 0 0;overflow:hidden"><div class="abs" style="left:0;top:0;width:706px;height:26px;background:linear-gradient(#96b0d0,#a1bbd9 40%,#b3cde8 90%,#bcd4ec);box-shadow:inset 0 1px 0 rgba(255,255,255,.55)"></div><div class="abs" style="left:0;top:26px;width:3px;height:287px;background:#c5dcf3"></div><div class="abs" style="right:0;top:26px;width:3px;height:287px;background:#c5dcf3"></div><div class="abs" style="left:0;bottom:1px;width:706px;height:2px;background:#c5dcf3"></div><div class="abs" style="left:0;bottom:0;width:706px;height:1px;background:#3ec8ec"></div><div class="abs" style="right:0;top:4px;width:1px;height:311px;background:#5fd0f0"></div></div>
<div class="abs nw" style="left:76px;top:347px;font:12px 'Liberation Sans',sans-serif;letter-spacing:-.25px">Direct Sale</div>
<div class="abs nw" style="left:78px;top:371px;font:bold 11.4px 'DejaVu Sans',sans-serif;color:#ff66dd">Ketik kode part atau nama part di kolom berikut dan tekan enter</div>
<div class="abs inp" style="left:78px;top:388px;width:391px;height:20px"></div>
<div class="abs ms" style="left:82px;top:390px">Cari.....</div>
<div class="abs" style="left:77px;top:421px;width:390px;height:221px;background:#ece9d8;border-top:2px solid #6a6a6a;border-left:2px solid #6a6a6a;border-right:1px solid #fff;border-bottom:1px solid #fff"></div>
<div class="abs" style="left:79px;top:423px;width:369px;height:202px;background:#808080"></div>
<div class="abs dh" style="left:79px;width:37px"></div>
<div class="abs dh thb" style="left:116px;width:120px">KODE PART</div>
<div class="abs dh thb" style="left:236px;width:160px">NAMA PART</div>
<div class="abs dh thb" style="left:396px;width:52px">STOK</div>
<div class="abs di" style="top:445px"></div>
<div class="abs dc th" style="left:116px;top:445px;width:120px">082FLD</div><div class="abs dc th" style="left:236px;top:445px;width:160px">FLORIDINA</div><div class="abs dc th" style="left:396px;top:445px;width:52px">46</div>
<div class="abs di" style="top:460px"></div>
<div class="abs dc th" style="left:116px;top:460px;width:120px">082KPK78</div><div class="abs dc th" style="left:236px;top:460px;width:160px">KOPIKO78</div><div class="abs dc th" style="left:396px;top:460px;width:52px">3</div>
<div class="abs di" style="top:475px"></div>
<div class="abs dc th" style="left:116px;top:475px;width:120px">08232M99K8JN9</div><div class="abs dc th" style="left:236px;top:475px;width:160px">MPX1 10W30 SJMA 0,8L</div><div class="abs dc th" style="left:396px;top:475px;width:52px">66</div>
<div class="abs di" style="top:490px"></div>
<div class="abs dc th" style="left:116px;top:490px;width:120px">08232M99K8JN1</div><div class="abs dc th" style="left:236px;top:490px;width:160px">MPX1 10W30 SJMA 1L</div><div class="abs dc th" style="left:396px;top:490px;width:52px">17</div>
<div class="abs di" style="top:505px"></div>
<div class="abs dc th" style="left:116px;top:505px;width:120px">08232M99K1JN1</div><div class="abs dc th" style="left:236px;top:505px;width:160px">MPX2 10W30 SJMB 0,8L IDE</div><div class="abs dc th" style="left:396px;top:505px;width:52px">213</div>
<div class="abs di" style="top:520px"></div>
<div class="abs dc th" style="left:116px;top:520px;width:120px">082322MAU0JN3</div><div class="abs dc th" style="left:236px;top:520px;width:160px">MPX3 20W40 SJMA 0,8L NIP</div><div class="abs dc th" style="left:396px;top:520px;width:52px">7</div>
<div class="abs di" style="top:535px"></div>
<div class="abs dc th" style="left:116px;top:535px;width:120px">08232M99K8BN9</div><div class="abs dc th" style="left:236px;top:535px;width:160px">OLI MPX2 10W30 0,8L</div><div class="abs dc th" style="left:396px;top:535px;width:52px">8</div>
<div class="abs di" style="top:550px"></div>
<div class="abs dc th" style="left:116px;top:550px;width:120px">082322MAU1JN3</div><div class="abs dc th" style="left:236px;top:550px;width:160px">OLI MPX3 20W40 1L NIP</div><div class="abs dc th" style="left:396px;top:550px;width:52px">30</div>
<div class="abs di" style="top:565px"></div>
<div class="abs dc th" style="left:116px;top:565px;width:120px">08234M99K0JN9</div><div class="abs dc th" style="left:236px;top:565px;width:160px">OLI SPX1 10W30 0,8L REP</div><div class="abs dc th" style="left:396px;top:565px;width:52px">19</div>
<div class="abs di" style="top:580px"></div>
<div class="abs dc th" style="left:116px;top:580px;width:120px">08234M99K1JN9</div><div class="abs dc th" style="left:236px;top:580px;width:160px">OLI SPX1 10W30 1L REP</div><div class="abs dc th" style="left:396px;top:580px;width:52px">3</div>
<div class="abs di" style="top:595px"></div>
<div class="abs dc th" style="left:116px;top:595px;width:120px">082342MBK8JN0</div><div class="abs dc th" style="left:236px;top:595px;width:160px">OLI SPX2 10W30 0,8L REP</div><div class="abs dc th" style="left:396px;top:595px;width:52px">516</div>
<div class="abs di" style="top:610px"></div>
<div class="abs dc th" style="left:116px;top:610px;width:120px">082322MBK8JN1</div><div class="abs dc th" style="left:236px;top:610px;width:160px">SCOOTER GEAR OIL (120) IDE</div><div class="abs dc th" style="left:396px;top:610px;width:52px">28</div>
<svg class="abs" style="left:94px;top:492px" width="8" height="12" viewBox="0 0 8 12"><path d="M1 0.5L7 6L1 11.5z" fill="#000"/></svg>
<div class="abs ms msr" style="left:381px;width:150px;top:392px;color:#000">Kode Part :</div>
<div class="abs inp" style="left:533px;top:389px;width:198px;height:20px"></div><div class="abs ms" style="left:536px;top:392px">08232M99K8JN1</div>
<div class="abs ms msr" style="left:381px;width:150px;top:415px;color:#000">Nama Part :</div>
<div class="abs inp" style="left:533px;top:412px;width:198px;height:20px"></div><div class="abs ms" style="left:536px;top:415px">MPX1 10W30 SJMA 1L</div>
<div class="abs ms msr" style="left:381px;width:150px;top:438px;color:#000">Harga :</div>
<div class="abs inp" style="left:533px;top:435px;width:89px;height:20px"></div><div class="abs lcds" style="left:540px;width:80px;top:440px">45<span class="cm">,</span>000</div>
<div class="abs ms msr" style="left:381px;width:150px;top:462px;color:#000">Stok :</div>
<div class="abs inp" style="left:533px;top:459px;width:39px;height:20px"></div><div class="abs lcds" style="left:533px;width:37.5px;top:464px">17</div>
<div class="abs ms msr" style="left:381px;width:150px;top:485px;color:#000">Qty :</div>
<div class="abs inp" style="left:533px;top:483px;width:39px;height:20px"></div><div class="abs lcds" style="left:533px;width:23.2px;top:488px">1</div>
<div class="abs inp" style="left:622px;top:481px;width:66px;height:19px"></div><div class="abs ms" style="left:625px;top:483px">0</div>
<div class="abs ms msr" style="left:399px;width:150px;top:507px;color:#000">Discount : (%)</div>
<div class="abs inp" style="left:555px;top:506px;width:36px;height:20px"></div><div class="abs lcds" style="left:555px;width:21.4px;top:511px">0</div>
<div class="abs ms" style="left:597px;top:507px">(Rp)</div>
<div class="abs inp" style="left:619px;top:506px;width:89px;height:20px"></div><div class="abs lcds" style="left:620px;width:85px;top:511px">0</div>
<div class="abs ms msr" style="left:380px;width:150px;top:533px;color:#ff0000">Ket. Diskon :</div>
<div class="abs inp" style="left:533px;top:530px;width:200px;height:21px"></div>
<div class="abs" style="left:715px;top:532px;width:17px;height:17px;background:#f0f0f0;border:1px solid;border-color:#fff #8a8a8a #8a8a8a #fff"></div>
<svg class="abs" style="left:719px;top:538px" width="8" height="5" viewBox="0 0 8 5"><path d="M0.5 0.5h7L4 4.5z" fill="#9a9a9a"/></svg>
<div class="abs ms msr" style="left:380px;width:150px;top:556px;color:#000">Total :</div>
<div class="abs inp" style="left:533px;top:555px;width:89px;height:20px"></div><div class="abs lcds" style="left:540px;width:80px;top:560px">45<span class="cm">,</span>000</div>
<div class="abs btn" style="left:576px"></div><div class="abs btn" style="left:655px"></div>
<svg class="abs" style="left:606px;top:594px" width="17" height="17" viewBox="0 0 17 17"><circle cx="8.5" cy="8.5" r="7.8" fill="#3fb72f" stroke="#2a8a22" stroke-width="1"/><path d="M2.5 6.5a6.5 6.5 0 0 1 12 0a10 6 0 0 1-12 0z" fill="#8ee080" opacity=".7"/><path d="M4.2 8.6l2.8 3 5.6-6" fill="none" stroke="#fff" stroke-width="2.2" stroke-linecap="round" stroke-linejoin="round"/></svg>
<svg class="abs" style="left:685px;top:594px" width="17" height="17" viewBox="0 0 17 17"><defs><linearGradient id="stp" x1="0" y1="0" x2="0" y2="1"><stop offset="0" stop-color="#ff6a5a"/><stop offset=".5" stop-color="#f02a20"/><stop offset="1" stop-color="#d81410"/></linearGradient></defs><path d="M5.300.6h6.400l4.700 4.700v6.400l-4.700 4.700H5.300L.6 11.700V5.300z" fill="url(#stp)" stroke="#c81a14" stroke-width=".6"/><path d="M4.300 9.600V4.700a.8.800 0 0 1 1.600 0V3.300a.8.800 0 0 1 1.600 0V2.800a.8.800 0 0 1 1.600 0v.6a.8.800 0 0 1 1.600 0V9l1.100-1.500a.8.800 0 0 1 1.300.9L11.400 12.600q-.8 1.400-2.400 1.400H7.300q-3 0-3-2.800z" fill="#fff"/><path d="M5.900 4.700v3M7.500 3.300v4.400M9.100 3.400v4.300" stroke="#f4b0a8" stroke-width=".4"/></svg>
<div class="abs ms msc" style="left:576px;width:77px;top:620px">OK</div>
<div class="abs ms msc" style="left:655px;width:77px;top:620px">Batal</div>

<!-- status bar -->
<div class="abs" style="left:0;top:708px;width:1366px;height:20px;background:#f0f0f0;border-top:1px solid #fbfbfb"></div>
<div class="abs ms" style="left:10px;top:713px">Customer Database Management System by cakracomp.com untuk NRA @ September 15</div>
<div class="abs" style="left:450px;top:712px;width:2px;height:16px;border-left:1px solid #a0a0a0;border-right:1px solid #fff"></div>
<div class="abs" style="left:454px;top:712px;width:94px;height:18px;border:1px solid;border-color:#a0a0a0 #fff #fff #a0a0a0"></div><div class="abs ms msc" style="left:454px;width:94px;top:713px;">26 Jan 2017</div>
<div class="abs" style="left:551px;top:712px;width:65px;height:18px;border:1px solid;border-color:#a0a0a0 #fff #fff #a0a0a0"></div><div class="abs ms msc" style="left:551px;width:65px;top:713px;">10:25:51</div>
<div class="abs" style="left:619px;top:712px;width:2px;height:16px;border-left:1px solid #a0a0a0;border-right:1px solid #fff"></div>
<div class="abs ms" style="left:626px;top:713px;color:#8f8f8f">NUM</div>
<div class="abs" style="left:657px;top:712px;width:2px;height:16px;border-left:1px solid #a0a0a0;border-right:1px solid #fff"></div>
<div class="abs ms" style="left:663px;top:713px;color:#8f8f8f">CAPS</div>
<div class="abs" style="left:695px;top:712px;width:2px;height:16px;border-left:1px solid #a0a0a0;border-right:1px solid #fff"></div>
<div class="abs" style="left:699px;top:712px;width:94px;height:18px;border:1px solid;border-color:#a0a0a0 #fff #fff #a0a0a0"></div><div class="abs ms msc" style="left:699px;width:94px;top:713px;">BADU</div>
<div class="abs" style="left:796px;top:712px;width:94px;height:18px;border:1px solid;border-color:#a0a0a0 #fff #fff #a0a0a0"></div><div class="abs ms msc" style="left:796px;width:94px;top:713px;">ONLINE</div>
<div class="abs" style="left:893px;top:712px;width:94px;height:18px;border:1px solid;border-color:#a0a0a0 #fff #fff #a0a0a0"></div><div class="abs ms " style="left:893px;width:94px;top:713px;padding-left:3px;">CHAT MODE: OFF</div>

</body>
</html>
